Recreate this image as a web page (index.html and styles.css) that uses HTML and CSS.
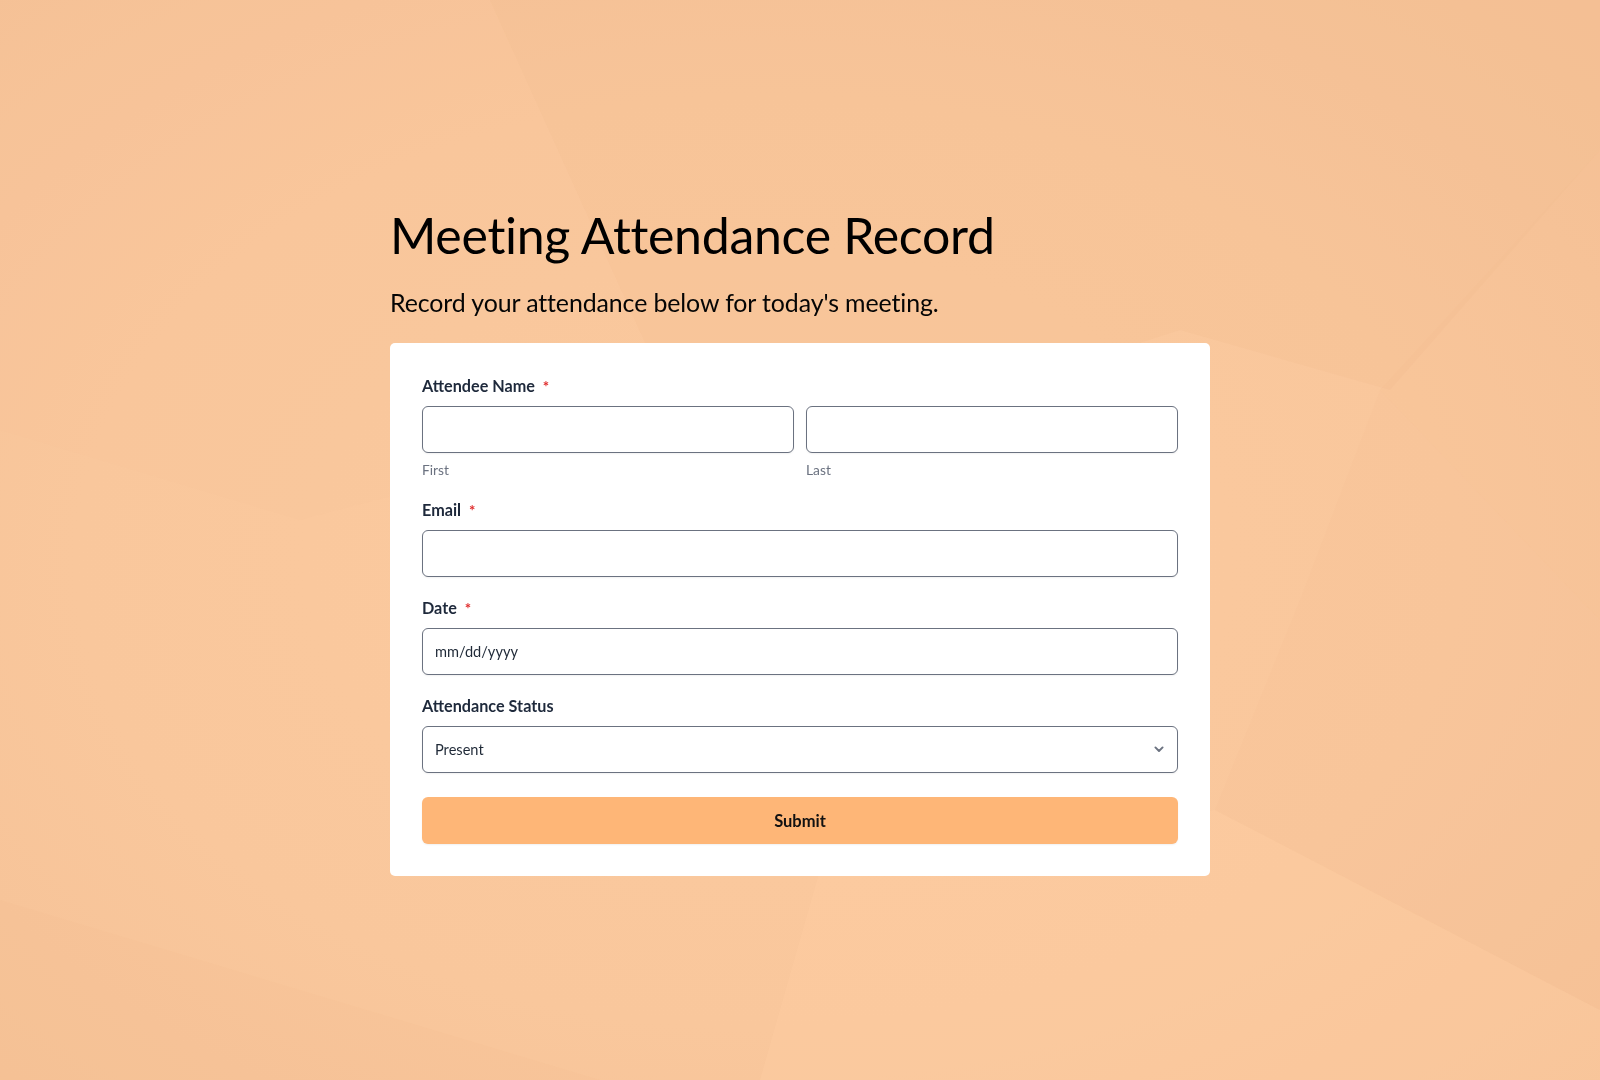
FILE: index.html
```html
<!DOCTYPE html>
<html lang="en">
<head>
<meta charset="utf-8">
<title>Meeting Attendance Record</title>
<link rel="stylesheet" href="styles.css">
</head>
<body>
<svg class="backdrop" viewBox="0 0 1600 1080" preserveAspectRatio="none" aria-hidden="true">
  <defs>
    <radialGradient id="glow" cx="48%" cy="52%" r="72%">
      <stop offset="0" stop-color="#fcca9f"/>
      <stop offset="0.6" stop-color="#f9c79c"/>
      <stop offset="1" stop-color="#f5c196"/>
    </radialGradient>
  </defs>
  <rect width="1600" height="1080" fill="url(#glow)"/>
  <polygon points="490,0 1600,0 1600,150 1390,390 1180,330 900,420 680,420" fill="#f1bb8e" opacity="0.2"/>
  <polygon points="1600,150 1600,620 1380,390" fill="#f3bf92" opacity="0.18"/>
  <polygon points="0,0 490,0 680,420 300,520 0,430" fill="#f6c298" opacity="0.15"/>
  <polygon points="1215,810 1600,1010 1600,1080 760,1080 820,870" fill="#fecfa4" opacity="0.35"/>
  <polygon points="0,900 600,1080 0,1080" fill="#f3bf93" opacity="0.2"/>
  <polygon points="1380,390 1600,620 1600,1010 1215,810 1300,600" fill="#f5c195" opacity="0.22"/>
</svg>

<main class="page">
  <header class="intro">
    <h1 class="title">Meeting Attendance Record</h1>
    <p class="subtitle">Record your attendance below for today's meeting.</p>
  </header>

  <form class="card">
    <div class="field field-name">
      <label class="label">Attendee Name <span class="req">*</span></label>
      <div class="name-row">
        <div class="name-col">
          <input class="input" type="text" aria-label="First">
          <span class="sublabel">First</span>
        </div>
        <div class="name-col">
          <input class="input" type="text" aria-label="Last">
          <span class="sublabel">Last</span>
        </div>
      </div>
    </div>

    <div class="field">
      <label class="label">Email <span class="req">*</span></label>
      <input class="input" type="email">
    </div>

    <div class="field">
      <label class="label">Date <span class="req">*</span></label>
      <input class="input input-date" type="text" placeholder="mm/dd/yyyy">
    </div>

    <div class="field field-last">
      <label class="label">Attendance Status</label>
      <div class="select-wrap">
        <select class="input select">
          <option>Present</option>
          <option>Absent</option>
          <option>Late</option>
        </select>
        <svg class="chevron" viewBox="0 0 20 20" aria-hidden="true">
          <path d="M5.5 8l4.5 4.5L14.5 8" fill="none" stroke="#6b7280" stroke-width="2.4" stroke-linecap="round" stroke-linejoin="round"/>
        </svg>
      </div>
    </div>

    <button class="submit" type="button">Submit</button>
  </form>
</main>
</body>
</html>
```

FILE: styles.css
```css
* { box-sizing: border-box; }

html, body {
  margin: 0;
  padding: 0;
}

body {
  min-height: 100vh;
  background: #f8c69b;
  font-family: Lato, "Noto Sans", "Liberation Sans", sans-serif;
  color: #1e293b;
}

.backdrop {
  position: fixed;
  inset: 0;
  width: 100%;
  height: 100%;
  z-index: -1;
}

.page {
  width: 820px;
  margin: 0 auto;
  padding-top: 206px;
}

.intro {
  display: flex;
  flex-direction: column;
  gap: 22px;
  margin-bottom: 24px;
}

.title {
  margin: 0;
  font-family: Lato, "Liberation Sans", sans-serif;
  font-weight: 400;
  font-size: 50px;
  line-height: 58px;
  color: #000000;
  letter-spacing: -0.3px;
}

.subtitle {
  margin: 0;
  font-size: 24.9px;
  line-height: 33px;
  color: #050505;
  letter-spacing: -0.1px;
}

.card {
  background: #ffffff;
  border-radius: 5px;
  padding: 32px;
  display: flex;
  flex-direction: column;
}

.field {
  display: flex;
  flex-direction: column;
  margin-bottom: 20px;
}

.field-name { margin-bottom: 20px; }
.field-last { margin-bottom: 24px; }

.label {
  font-size: 16.2px;
  line-height: 22px;
  font-weight: 700;
  color: #1e293b;
  margin-bottom: 9px;
}

.req {
  color: #e02d2d;
  font-size: 15px;
  font-weight: 700;
  margin-left: 4px;
  vertical-align: 0;
}

.name-row {
  display: grid;
  grid-template-columns: 1fr 1fr;
  gap: 12px;
}

.name-col {
  display: flex;
  flex-direction: column;
}

.sublabel {
  margin-top: 8px;
  font-size: 13.8px;
  line-height: 18px;
  color: #6b7280;
}

.input {
  display: block;
  width: 100%;
  height: 47px;
  border: 1px solid #6b7280;
  border-radius: 6px;
  background: #ffffff;
  padding: 0 12px;
  font-family: Lato, "Noto Sans", sans-serif;
  font-size: 14.6px;
  color: #1f2937;
  box-shadow: 0 1px 2px rgba(0, 0, 0, 0.06);
  outline: none;
}

.input-date::placeholder {
  color: #1f2937;
  opacity: 1;
}

.select-wrap {
  position: relative;
}

.select {
  appearance: none;
  -webkit-appearance: none;
  padding-right: 40px;
}

.chevron {
  position: absolute;
  right: 11px;
  top: 50%;
  width: 16px;
  height: 16px;
  margin-top: -9px;
  pointer-events: none;
}

.submit {
  height: 47px;
  border: none;
  border-radius: 6px;
  background: #feb677;
  font-family: Lato, "Noto Sans", sans-serif;
  font-size: 16.5px;
  font-weight: 700;
  color: #111111;
  box-shadow: 0 1px 2px rgba(0, 0, 0, 0.06);
  cursor: pointer;
}
```
